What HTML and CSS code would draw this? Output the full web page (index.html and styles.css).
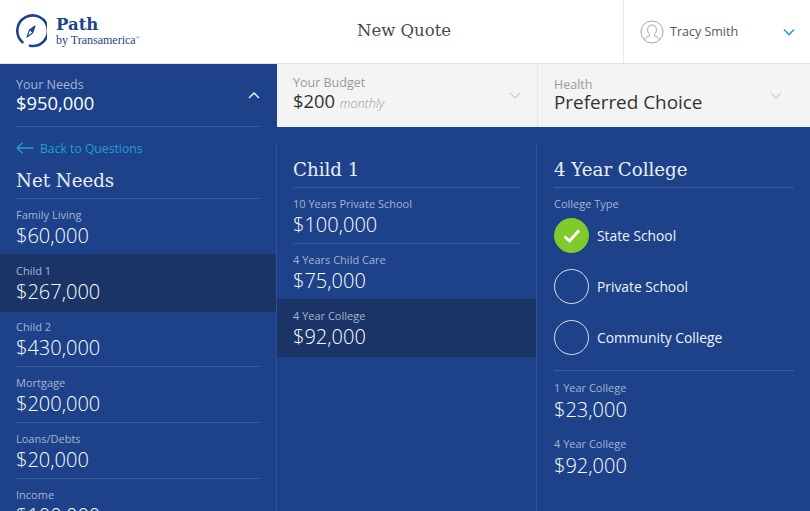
FILE: index.html
```html
<!DOCTYPE html>
<html lang="en">
<head>
<meta charset="utf-8">
<title>New Quote</title>
<link rel="stylesheet" href="styles.css">
</head>
<body>
<div class="page">
  <header class="header">
    <div class="brand">
      <svg class="logo" width="32" height="34" viewBox="1 0 32 34" fill="none">
        <path d="M8.500 28.200A15.300 15.300 0 1 1 16 31.800" stroke="#1d4488" stroke-width="2.600" stroke-linecap="round"/>
        <path d="M21 12L18.500 19 13 23 15.500 16Z" stroke="#1d4488" stroke-width="1.100" stroke-linejoin="round"/>
        <path d="M21 12L15.500 16 18.500 19Z" fill="#1d4488"/>
      </svg>
      <div class="brand-text">
        <div class="brand-name">Path</div>
        <div class="brand-sub">by Transamerica<sup class="reg">®</sup></div>
      </div>
    </div>
    <div class="title">New Quote</div>
    <div class="user">
      <svg class="avatar" width="24" height="24" viewBox="0 0 24 24" fill="none" stroke="#9a9a9a" stroke-width="0.900">
        <circle cx="12" cy="12" r="11"/>
        <path d="M4.500 20c.4-2.600 2.600-3.400 5-4.200v-1.500c-1.300-1-1.900-2.500-1.900-4.800C7.600 6.500 9.400 5 12 5s4.400 1.500 4.400 4.500c0 2.300-.6 3.800-1.900 4.800v1.500c2.400.8 4.600 1.600 5 4.200"/>
      </svg>
      <span class="user-name">Tracy Smith</span>
      <svg class="user-caret" width="12" height="8" viewBox="0 0 12 8" fill="none"><path d="M1 1.500L6 6.500 11 1.500" stroke="#2a9fd6" stroke-width="1.600"/></svg>
    </div>
  </header>

  <nav class="tabs">
    <div class="tab tab-active">
      <div><div class="tab-label">Your Needs</div><div class="tab-value">$950,000</div></div>
      <svg class="caret" width="12" height="7" viewBox="0 0 12 7" fill="none"><path d="M1 6L6 1 11 6" stroke="#fff" stroke-width="1.300"/></svg>
    </div>
    <div class="tab">
      <div><div class="tab-label">Your Budget</div><div class="tab-value">$200 <em class="tab-note">monthly</em></div></div>
      <svg class="caret" width="12" height="7" viewBox="0 0 12 7" fill="none"><path d="M1 1L6 6 11 1" stroke="#cfcfcf" stroke-width="1.200"/></svg>
    </div>
    <div class="tab tab-last">
      <div><div class="tab-label">Health</div><div class="tab-value">Preferred Choice</div></div>
      <svg class="caret" width="12" height="7" viewBox="0 0 12 7" fill="none"><path d="M1 1L6 6 11 1" stroke="#cfcfcf" stroke-width="1.200"/></svg>
    </div>
  </nav>

  <main class="columns">
    <section class="col col-left">
      <a class="back">
        <svg width="18" height="12" viewBox="0 0 18 12" fill="none"><path d="M17.500 6H1M6.500 .7L1 6l5.500 5.300" stroke="#1f9fd8" stroke-width="1.300"/></svg>
        <span>Back to Questions</span>
      </a>
      <h2 class="heading">Net Needs</h2>
      <div class="item"><div class="item-label">Family Living</div><div class="item-value">$60,000</div></div>
      <div class="item selected"><div class="item-label">Child 1</div><div class="item-value">$267,000</div></div>
      <div class="item"><div class="item-label">Child 2</div><div class="item-value">$430,000</div></div>
      <div class="item"><div class="item-label">Mortgage</div><div class="item-value">$200,000</div></div>
      <div class="item"><div class="item-label">Loans/Debts</div><div class="item-value">$20,000</div></div>
      <div class="item"><div class="item-label">Income</div><div class="item-value">$100,000</div></div>
    </section>
    <section class="col col-mid">
      <h2 class="heading">Child 1</h2>
      <div class="item"><div class="item-label">10 Years Private School</div><div class="item-value">$100,000</div></div>
      <div class="item"><div class="item-label">4 Years Child Care</div><div class="item-value">$75,000</div></div>
      <div class="item selected"><div class="item-label">4 Year College</div><div class="item-value">$92,000</div></div>
    </section>
    <section class="col col-right">
      <h2 class="heading">4 Year College</h2>
      <div class="field-label">College Type</div>
      <div class="options">
        <div class="option">
          <span class="radio radio-on">
            <svg width="20" height="16" viewBox="0 0 20 16" fill="none"><path d="M2.500 8.500L7.500 13 17 2.500" stroke="#fff" stroke-width="3"/></svg>
          </span>
          State School
        </div>
        <div class="option"><span class="radio"></span>Private School</div>
        <div class="option"><span class="radio"></span>Community College</div>
      </div>
      <div class="item item-top"><div class="item-label">1 Year College</div><div class="item-value">$23,000</div></div>
      <div class="item"><div class="item-label">4 Year College</div><div class="item-value">$92,000</div></div>
    </section>
  </main>
</div>
</body>
</html>
```

FILE: styles.css
```css
* { box-sizing: border-box; }
html, body { margin: 0; height: 100%; overflow: hidden; }
body { font-family: "Open Sans", sans-serif; background: #1d4289; color: #fff; }
.page { width: 810px; height: 511px; overflow: hidden; }

.header { height: 63px; background: #fff; display: flex; align-items: center; }
.brand { width: 277px; display: flex; align-items: center; padding-left: 15px; gap: 9px; }
.logo { display: block; margin-top: -1px; }
.brand-text { color: #1d4488; }
.brand-name { font-family: "DejaVu Serif", serif; font-size: 16.500px; font-weight: 700; line-height: 18px; }
.brand-sub { font-family: "Liberation Serif", serif; font-size: 12px; line-height: 13px; white-space: nowrap; }
.reg { font-size: 5px; vertical-align: top; line-height: 8px; }
.title { width: 346px; padding-right: 92px; text-align: center; font-family: "DejaVu Serif", serif; font-weight: 300; font-size: 16.500px; color: #4a4a4a; padding-bottom: 3px; }
.user { width: 187px; height: 63px; border-left: 1px solid #e8e8e8; display: flex; align-items: center; padding-left: 16px; }
.user-name { font-size: 12.500px; color: #555; margin-left: 6px; padding-bottom: 1px; }
.user-caret { margin-left: auto; margin-right: 15px; margin-top: 1px; }

.tabs { height: 64px; display: flex; border-top: 1px solid #e2e2e2; }
.tab { background: #f4f4f4; color: #333; display: flex; align-items: center; justify-content: space-between; padding: 0 16px; width: 261px; border-right: 1px solid #e4e4e4; }
.tab-active { background: #1d4289; color: #fff; width: 277px; border-right: 0; padding-right: 17px; position: relative; }
.tab-active::after { content: ""; position: absolute; left: 16px; right: 16px; bottom: 0; height: 1px; background: #3a5c9c; }
.tab-last { flex: 1; border-right: 0; padding-right: 28px; }
.tab-label { font-size: 12.500px; line-height: 15px; color: #999; margin-top: -1px; margin-bottom: -1px; }
.tab-active .tab-label { color: #a5b4d2; }
.tab-value { font-size: 18.400px; line-height: 23px; color: #333; white-space: nowrap; }
.tab-active .tab-value { color: #fff; }
.tab-last .tab-value { font-size: 18.900px; }
.tab-note { font-size: 12.600px; font-weight: 300; color: #999; }

.columns { display: flex; height: 384px; }
.col { flex: none; }
.col-left { width: 276px; }
.col-mid { width: 261px; margin-top: 17px; border-left: 1px solid #2c5193; border-right: 1px solid #2c5193; }
.col-right { flex: 1; margin-top: 17px; }
.back { display: flex; align-items: center; gap: 6px; margin: 13px 0 0 16px; height: 16px; color: #1f9fd8; font-size: 12.200px; }
.heading { margin: 0 16px; font-family: "DejaVu Serif", serif; font-weight: 300; font-size: 18.200px; line-height: 26px; height: 44px; padding-top: 13px; border-bottom: 1px solid #3a5c9c; color: #e9eef6; }
.col-left .heading { height: 42.500px; padding-top: 12px; }
.col-right .heading { margin-left: 17px; }
.item { padding: 8px 16px 0; height: 56.200px; position: relative; }
.item::after { content: ""; position: absolute; left: 16px; right: 16px; bottom: 0; height: 1px; background: #3a5c9c; }
.col-right .item { padding-left: 17px; }
.col-right .item::after { display: none; }
.col-right .item-top { padding-top: 9px; height: 57px; }
.col-right .item-value { margin-top: 1px; }
.selected { background: #1a3468; height: 58px; margin-top: -1px; margin-bottom: -.8px; padding-top: 9px; }
.selected::after { display: none; }
.item-label { font-size: 11px; line-height: 16px; color: #a5b4d2; }
.item-value { font-size: 20px; line-height: 26px; font-weight: 300; color: #fff; }
.field-label { margin: 8px 0 0 17px; font-size: 11px; line-height: 16px; color: #a5b4d2; }
.options { margin: 0 16px 0 17px; padding: 6px 0 15px; border-bottom: 1px solid #3a5c9c; display: flex; flex-direction: column; gap: 16px; }
.option { display: flex; align-items: center; gap: 8px; font-size: 13.800px; height: 35px; color: #f0f3f9; padding-bottom: 1px; }
.radio { width: 35px; height: 35px; border-radius: 50%; border: 1px solid #d7deeb; display: flex; align-items: center; justify-content: center; flex: none; margin-top: 1px; }
.radio-on { background: #7ecb2b; border-color: #7ecb2b; }
```
